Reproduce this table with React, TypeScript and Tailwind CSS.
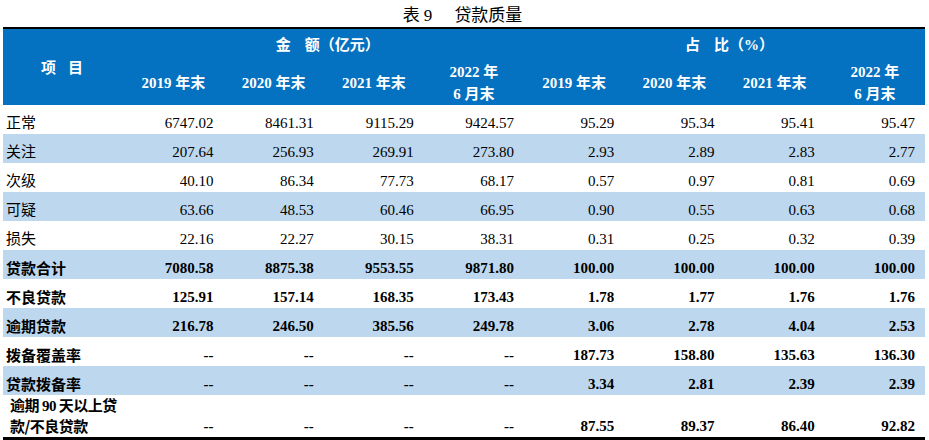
const serif = "font-['Liberation_Serif','Noto_Sans_CJK_SC',serif]";

type Row = { label: React.ReactNode; key: string; values: string[]; bold?: boolean; shaded?: boolean; tall?: boolean };

const rows: Row[] = [
  { key: "zc", label: "正常", values: ["6747.02", "8461.31", "9115.29", "9424.57", "95.29", "95.34", "95.41", "95.47"] },
  { key: "gz", label: "关注", values: ["207.64", "256.93", "269.91", "273.80", "2.93", "2.89", "2.83", "2.77"], shaded: true },
  { key: "cj", label: "次级", values: ["40.10", "86.34", "77.73", "68.17", "0.57", "0.97", "0.81", "0.69"] },
  { key: "ky", label: "可疑", values: ["63.66", "48.53", "60.46", "66.95", "0.90", "0.55", "0.63", "0.68"], shaded: true },
  { key: "ss", label: "损失", values: ["22.16", "22.27", "30.15", "38.31", "0.31", "0.25", "0.32", "0.39"] },
  { key: "hj", label: "贷款合计", values: ["7080.58", "8875.38", "9553.55", "9871.80", "100.00", "100.00", "100.00", "100.00"], bold: true, shaded: true },
  { key: "bl", label: "不良贷款", values: ["125.91", "157.14", "168.35", "173.43", "1.78", "1.77", "1.76", "1.76"], bold: true },
  { key: "yq", label: "逾期贷款", values: ["216.78", "246.50", "385.56", "249.78", "3.06", "2.78", "4.04", "2.53"], bold: true, shaded: true },
  { key: "fg", label: "拨备覆盖率", values: ["--", "--", "--", "--", "187.73", "158.80", "135.63", "136.30"], bold: true },
  { key: "bb", label: "贷款拨备率", values: ["--", "--", "--", "--", "3.34", "2.81", "2.39", "2.39"], bold: true, shaded: true },
  {
    key: "yq90",
    label: (
      <>
        <span className="block whitespace-nowrap">
          逾期 <span className="font-['Liberation_Serif',serif]">90</span> 天以上贷
        </span>
        <span className="block whitespace-nowrap">款/不良贷款</span>
      </>
    ),
    values: ["--", "--", "--", "--", "87.55", "89.37", "86.40", "92.82"],
    bold: true,
    tall: true,
  },
];

const periods = ["2019 年末", "2020 年末", "2021 年末", "2022 年\n6 月末"];

function HeadCell({ text }: { text: string }) {
  return (
    <th className="w-[100px] p-0 text-center align-middle font-bold leading-[22px] whitespace-pre-line">
      {text}
    </th>
  );
}

export default function App() {
  return (
    <div className={`w-[929px] h-[440px] bg-white ${serif} text-black`}>
      <div className="h-[27px] pt-[6px] text-center text-[17px] leading-[20px] pr-[4px]">
        表 9<span className="inline-block w-[22px]" />贷款质量
      </div>
      <table className="ml-[3px] w-[922px] table-fixed border-collapse border-t-2 border-b-[3px] border-black text-[15px]">
        <colgroup>
          <col className="w-[120px]" />
          {Array.from({ length: 8 }).map((_, i) => (
            <col key={i} className="w-[100px]" />
          ))}
        </colgroup>
        <thead className="bg-[#0571c1] text-white">
          <tr className="h-[33px]">
            <th rowSpan={2} className="p-0 text-center align-middle font-bold font-['Noto_Sans_CJK_SC',sans-serif] text-[15px] tracking-[12px] pl-[10px]">
              项目
            </th>
            <th colSpan={4} className="p-0 pl-[8px] text-center align-middle font-bold">
              金<span className="inline-block w-[14px]" />额（亿元）
            </th>
            <th colSpan={4} className="p-0 pl-[10px] text-center align-middle font-bold">
              占<span className="inline-block w-[14px]" />比（%）
            </th>
          </tr>
          <tr className="h-[43px]">
            {[...periods, ...periods].map((p, i) => (
              <HeadCell key={i} text={p} />
            ))}
          </tr>
        </thead>
        <tbody>
          {rows.map((r) => (
            <tr
              key={r.key}
              className={`${r.tall ? "h-[40px]" : "h-[29px]"} ${r.shaded ? "bg-[#bdd7ee]" : "bg-white"} ${r.bold ? "font-bold" : ""}`}
            >
              <td
                className={`p-0 pb-[1px] align-bottom leading-[20px] ${r.tall ? "pl-[7px] tracking-[-0.5px]" : "pl-[3px]"} ${
                  r.bold ? "font-['Noto_Sans_CJK_SC',sans-serif] font-bold" : ""
                }`}
              >
                {r.label}
              </td>
              {r.values.map((v, i) => (
                <td key={i} className="p-0 pr-[10px] pb-[1px] text-right align-bottom leading-[20px]">
                  {v}
                </td>
              ))}
            </tr>
          ))}
        </tbody>
      </table>
    </div>
  );
}
